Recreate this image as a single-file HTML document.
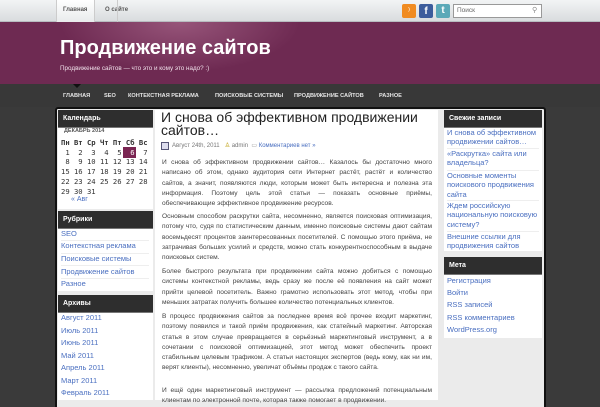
<!DOCTYPE html>
<html><head><meta charset="utf-8"><style>
*{margin:0;padding:0;box-sizing:border-box}
body{width:600px;height:400px;overflow:hidden;background:#3a3a3a;font-family:"Liberation Sans","DejaVu Sans",sans-serif;position:relative}
.a{position:absolute;white-space:nowrap}
#top{position:absolute;left:0;top:0;width:600px;height:22px;background:linear-gradient(#f2f4f5,#d9dcde);border-bottom:1px solid #b8bcc0}
#hdr{position:absolute;left:0;top:22px;width:600px;height:62px;background:radial-gradient(ellipse 120px 50px at 180px 0px,#97557a,#6e2a52 100%);background-color:#6c2850}
#nav{position:absolute;left:0;top:84px;width:600px;height:23px;background:#383838}
.nv{position:absolute;top:93px;font-size:5.6px;font-weight:bold;color:#e6e6e6}
#box{position:absolute;left:55px;top:107px;width:491px;height:300px;background:#ebebeb;border:2px solid #111;border-bottom:none;border-radius:3px 3px 0 0}
.wh{position:absolute;background:#2e2e2e;color:#fff;font-size:7px;font-weight:bold;padding-left:5px;line-height:17px;border-bottom:1px solid #777}
.wb{position:absolute;background:#fff}
.lk{position:absolute;font-size:7.5px;color:#4a6fc0;white-space:nowrap}
.ln{position:absolute;height:1px;background:#eee}
#content{position:absolute;left:155px;top:110px;width:283px;height:290px;background:#fff}
.p{position:absolute;left:162px;width:270px;font-size:6.6px;line-height:10.3px;color:#444;text-align:justify}
.cal{position:absolute;font-size:7.6px;color:#333}
</style></head><body>
<div id="top"></div>
<div class="a" style="left:56px;top:0;width:39px;height:22px;background:linear-gradient(#fff,#e9ebec);border-left:1px solid #ccc;border-right:1px solid #ccc"></div>
<div class="a" style="left:63px;top:7px;font-size:6px;font-weight:bold;color:#555">Главная</div>
<div class="a" style="left:105px;top:7px;font-size:6px;font-weight:bold;color:#555">О сайте</div>
<div class="a" style="left:117px;top:0;width:1px;height:22px;background:#ccc"></div>
<div class="a" style="left:402px;top:4px;width:14px;height:14px;background:#f08b21;border-radius:2px;color:#fff;font-size:9px;line-height:14px;text-align:center">⁾</div>
<div class="a" style="left:419px;top:4px;width:14px;height:14px;background:#3c5c9c;border-radius:2px;color:#fff;font-size:10px;font-weight:bold;line-height:15px;text-align:center">f</div>
<div class="a" style="left:436px;top:4px;width:14px;height:14px;background:#5ba9b8;border-radius:2px;color:#fff;font-size:10px;font-weight:bold;line-height:14px;text-align:center">t</div>
<div class="a" style="left:453px;top:4px;width:89px;height:14px;background:#fff;border:1px solid #999"></div>
<div class="a" style="left:457px;top:7px;font-size:6.5px;color:#666">Поиск</div>
<div class="a" style="left:532px;top:6px;font-size:7px;color:#888">⚲</div>
<div id="hdr"></div>
<div class="a" style="left:60px;top:37px;font-size:20px;font-weight:bold;color:#fff">Продвижение сайтов</div>
<div class="a" style="left:60px;top:65px;font-size:6.3px;color:#f0e0ea">Продвижение сайтов — что это и кому это надо? :)</div>
<div id="nav"></div>
<div class="a" style="left:73px;top:84px;width:0;height:0;border:4px solid transparent;border-top:4px solid #111"></div>
<div class="nv" style="left:63px">ГЛАВНАЯ</div>
<div class="nv" style="left:104px">SEO</div>
<div class="nv" style="left:128px">КОНТЕКСТНАЯ РЕКЛАМА</div>
<div class="nv" style="left:215px">ПОИСКОВЫЕ СИСТЕМЫ</div>
<div class="nv" style="left:294px">ПРОДВИЖЕНИЕ САЙТОВ</div>
<div class="nv" style="left:379px">РАЗНОЕ</div>
<div id="box"></div>
<div id="content"></div>

<!-- left sidebar -->
<div class="wb" style="left:58px;top:127px;width:95px;height:82px"></div>
<div class="wh" style="left:58px;top:110px;width:95px">Календарь</div>
<div class="cal" style="left:64px;top:128px;font-size:5.5px;font-weight:bold;color:#555">ДЕКАБРЬ 2014</div>
<div class="a" style="left:123px;top:147px;width:13px;height:11px;background:#7a2552"></div>
<div class="cal" style="left:61px;top:138px;line-height:9.7px;font-family:'DejaVu Sans Mono','Liberation Mono',monospace;font-size:7.2px;white-space:pre"><b>Пн Вт Ср Чт Пт Сб Вс</b>
 1  2  3  4  5  <span style="color:#fff">6</span>  7
 8  9 10 11 12 13 14
15 16 17 18 19 20 21
22 23 24 25 26 27 28
29 30 31</div>
<div class="lk" style="left:71px;top:196px;font-size:7px">« Авг</div>

<div class="wb" style="left:58px;top:228px;width:95px;height:63px"></div>
<div class="wh" style="left:58px;top:211px;width:95px">Рубрики</div>
<div class="lk" style="left:61px;top:229px">SEO</div>
<div class="ln" style="left:61px;top:240px;width:88px"></div>
<div class="lk" style="left:61px;top:241px">Контекстная реклама</div>
<div class="ln" style="left:61px;top:253px;width:88px"></div>
<div class="lk" style="left:61px;top:254px">Поисковые системы</div>
<div class="ln" style="left:61px;top:265px;width:88px"></div>
<div class="lk" style="left:61px;top:267px">Продвижение сайтов</div>
<div class="ln" style="left:61px;top:278px;width:88px"></div>
<div class="lk" style="left:61px;top:279px">Разное</div>

<div class="wb" style="left:58px;top:312px;width:95px;height:88px"></div>
<div class="wh" style="left:58px;top:295px;width:95px">Архивы</div>
<div class="lk" style="left:61px;top:313px">Август 2011</div>
<div class="lk" style="left:61px;top:326px">Июль 2011</div>
<div class="lk" style="left:61px;top:338px">Июнь 2011</div>
<div class="lk" style="left:61px;top:351px">Май 2011</div>
<div class="lk" style="left:61px;top:363px">Апрель 2011</div>
<div class="lk" style="left:61px;top:376px">Март 2011</div>
<div class="lk" style="left:61px;top:388px">Февраль 2011</div>

<!-- content -->
<div class="a" style="left:161px;top:111px;font-size:14px;line-height:13px;color:#222;white-space:normal;width:275px">И снова об эффективном продвижении сайтов…</div>
<div class="a" style="left:161px;top:142px;width:8px;height:8px;border:1px solid #557;background:#dde"></div>
<div class="a" style="left:172px;top:142px;font-size:6px;color:#777">Август 24th, 2011 &nbsp;&nbsp;<span style="color:#b90">♙</span> admin &nbsp;<span style="color:#999">▭</span> <span style="color:#4a6fc0">Комментариев нет »</span></div>
<div class="p" style="top:158px">И снова об эффективном продвижении сайтов… Казалось бы достаточно много написано об этом, однако аудитория сети Интернет растёт, растёт и количество сайтов, а значит, появляются люди, которым может быть интересна и полезна эта информация. Поэтому цель этой статьи — показать основные приёмы, обеспечивающие эффективное продвижение ресурсов.</div>
<div class="p" style="top:212px">Основным способом раскрутки сайта, несомненно, является поисковая оптимизация, потому что, судя по статистическим данным, именно поисковые системы дают сайтам восемьдесят процентов заинтересованных посетителей. С помощью этого приёма, не затрачивая больших усилий и средств, можно стать конкурентноспособным в выдаче поисковых систем.</div>
<div class="p" style="top:267px">Более быстрого результата при продвижении сайта можно добиться с помощью системы контекстной рекламы, ведь сразу же после её появления на сайт может прийти целевой посетитель. Важно грамотно использовать этот метод, чтобы при меньших затратах получить большее количество потенциальных клиентов.</div>
<div class="p" style="top:312px">В процесс продвижения сайтов за последнее время всё прочее входит маркетинг, поэтому появился и такой приём продвижения, как статейный маркетинг. Авторская статья в этом случае превращается в серьёзный маркетинговый инструмент, а в сочетании с поисковой оптимизацией, этот метод может обеспечить проект стабильным целевым трафиком. А статьи настоящих экспертов (ведь кому, как ни им, верят клиенты), несомненно, увеличат объёмы продаж с такого сайта.</div>
<div class="p" style="top:386px">И ещё один маркетинговый инструмент — рассылка предложений потенциальным клиентам по электронной почте, которая также помогает в продвижении.</div>

<!-- right sidebar -->
<div class="wb" style="left:444px;top:127px;width:98px;height:124px"></div>
<div class="wh" style="left:444px;top:110px;width:98px">Свежие записи</div>
<div class="lk" style="left:447px;top:128px;line-height:9.3px;white-space:pre">И снова об эффективном
продвижении сайтов…</div>
<div class="ln" style="left:447px;top:148px;width:92px"></div>
<div class="lk" style="left:447px;top:149px;line-height:9.3px;white-space:pre">«Раскрутка» сайта или
владельца?</div>
<div class="ln" style="left:447px;top:170px;width:92px"></div>
<div class="lk" style="left:447px;top:171px;line-height:9.3px;white-space:pre">Основные моменты
поискового продвижения
сайта</div>
<div class="ln" style="left:447px;top:200px;width:92px"></div>
<div class="lk" style="left:447px;top:201px;line-height:9.3px;white-space:pre">Ждем российскую
национальную поисковую
систему?</div>
<div class="ln" style="left:447px;top:231px;width:92px"></div>
<div class="lk" style="left:447px;top:232px;line-height:9.3px;white-space:pre">Внешние ссылки для
продвижения сайтов</div>

<div class="wb" style="left:444px;top:273px;width:98px;height:65px"></div>
<div class="wh" style="left:444px;top:257px;width:98px">Мета</div>
<div class="lk" style="left:447px;top:276px">Регистрация</div>
<div class="lk" style="left:447px;top:288px">Войти</div>
<div class="lk" style="left:447px;top:300px">RSS записей</div>
<div class="lk" style="left:447px;top:313px">RSS комментариев</div>
<div class="lk" style="left:447px;top:325px">WordPress.org</div>
</body></html>
